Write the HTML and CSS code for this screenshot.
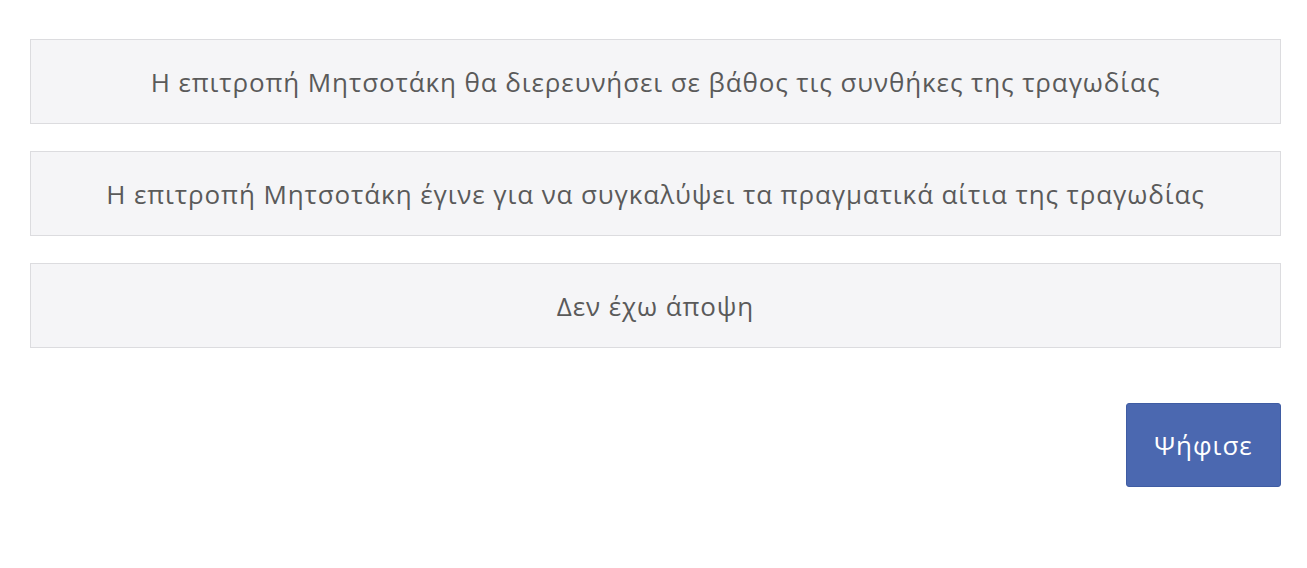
FILE: index.html
```html
<!DOCTYPE html>
<html lang="el">
<head>
  <meta charset="UTF-8" />
  <meta name="viewport" content="width=device-width, initial-scale=1.0"/>
  <title>Δημοσκόπηση</title>
  <link rel="stylesheet" href="styles.css">
</head>
<body>
  <form class="poll">
    <div class="options">
      <label class="option">Η επιτροπή Μητσοτάκη θα διερευνήσει σε βάθος τις συνθήκες της τραγωδίας</label>
      <label class="option">Η επιτροπή Μητσοτάκη έγινε για να συγκαλύψει τα πραγματικά αίτια της τραγωδίας</label>
      <label class="option">Δεν έχω άποψη</label>
    </div>
    <div class="actions">
      <button type="button" class="vote">Ψήφισε</button>
    </div>
  </form>
</body>
</html>
```

FILE: styles.css
```css
body {
  font-family: 'Open Sans', 'Noto Sans', sans-serif;
  margin: 0;
  background-color: #fff;
}
.poll {
  padding: 39px 26px 0 30px;
}
.options {
  display: flex;
  flex-direction: column;
  gap: 27px;
}
.option {
  display: flex;
  align-items: center;
  justify-content: center;
  height: 83px;
  border: 1px solid #dcdcdf;
  background-color: #f5f5f7;
  color: #5a5a5a;
  font-size: 26px;
  letter-spacing: 0.9px;
}
.actions {
  display: flex;
  justify-content: flex-end;
  margin-top: 55px;
}
.vote {
  width: 155px;
  height: 84px;
  border: 1px solid #3f5ca3;
  border-radius: 3px;
  background-color: #4b68b0;
  color: #fff;
  font-family: inherit;
  font-size: 26px;
  letter-spacing: 1px;
}
```
